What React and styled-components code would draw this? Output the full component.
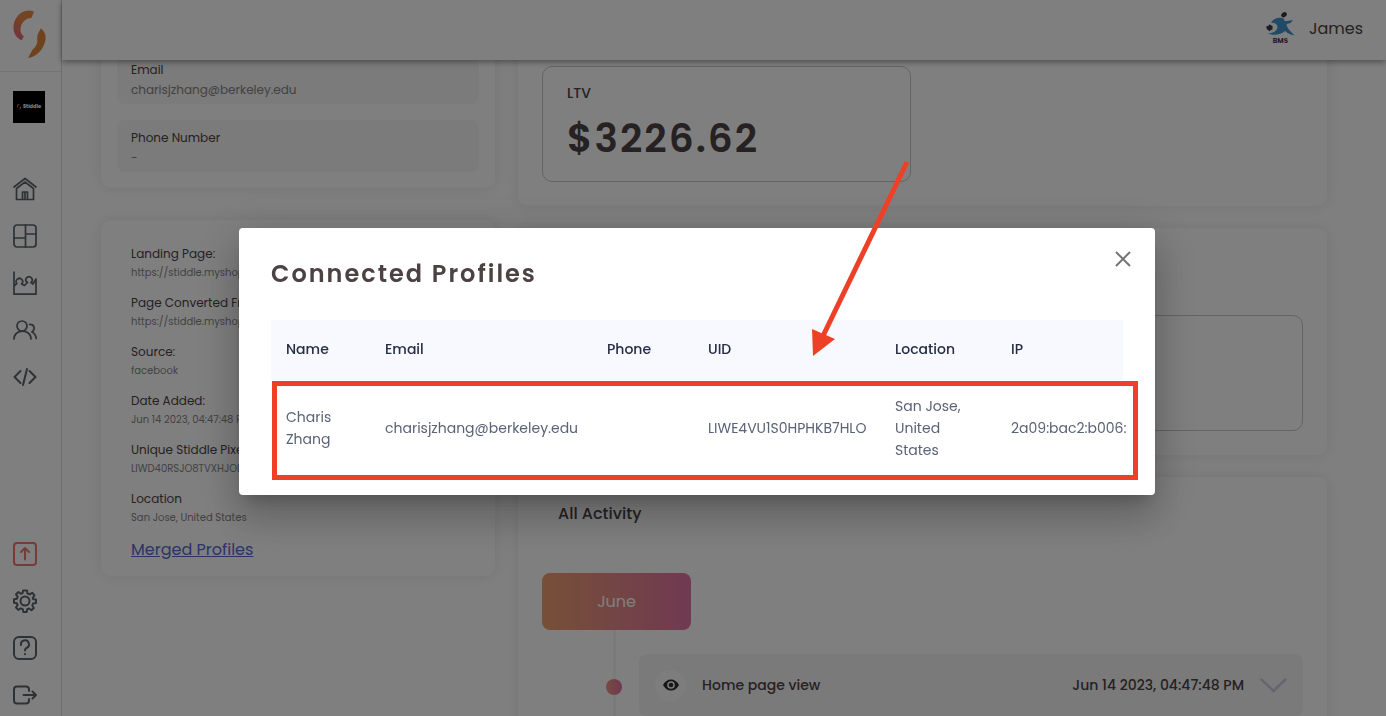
import React from "react";
import styled, { createGlobalStyle } from "styled-components";

const GlobalStyle = createGlobalStyle`
  * {
    box-sizing: border-box;
  }

  body {
    margin: 0;
    background: #fff;
    color: #4c4244;
    font-family: Poppins, Inter, sans-serif;
  }
`;

const Shell = styled.div`
  display: flex;
  height: 100vh;
  overflow: hidden;
`;

const Sidebar = styled.aside`
  width: 62px;
  flex-shrink: 0;
  display: flex;
  flex-direction: column;
  border-right: 1px solid #dcdcdc;
  padding-bottom: 9px;
`;

const Brand = styled.a`
  display: block;
  height: 72px;
  padding: 10px 13px;
  border-bottom: 1px solid #e8e8e8;
`;

const StoreBadge = styled.div`
  width: 32px;
  height: 32px;
  margin: 19px 0 54px 13px;
  background: #000;
  color: #fff;
  display: flex;
  align-items: center;
  justify-content: center;
  gap: 2px;
  font-size: 5px;
  font-weight: 700;
`;

const Nav = styled.nav`
  display: flex;
  flex-direction: column;
  gap: 23px;
  padding-left: 13px;
  margin-top: ${(props) => (props.$bottom ? "auto" : "0")};
`;

const NavLink = styled.a`
  width: 24px;
  height: 24px;
  color: ${(props) => (props.$accent ? "#f0776e" : "#5c6468")};

  svg {
    display: block;
    fill: none;
    stroke: currentColor;
    stroke-width: ${(props) => (props.$bold ? 2 : 1.7)};
    stroke-linecap: round;
    stroke-linejoin: round;
  }
`;

const Main = styled.div`
  flex: 1;
  min-width: 0;
  display: flex;
  flex-direction: column;
`;

const Header = styled.header`
  height: 60px;
  flex-shrink: 0;
  position: relative;
  z-index: 1;
  display: flex;
  align-items: center;
  justify-content: flex-end;
  gap: 14px;
  padding: 0 23px 4px;
  background: #fff;
  box-shadow: 0 2px 6px rgba(0, 0, 0, 0.4);
`;

const Company = styled.div`
  display: flex;
  flex-direction: column;
  align-items: center;
  font-size: 7px;
  line-height: 8px;
  font-weight: 700;
`;

const UserName = styled.span`
  font-size: 16px;
`;

const Content = styled.main`
  display: grid;
  grid-template-columns: 19fr 39fr;
  gap: 23px;
  align-items: start;
  margin-top: -24px;
  padding: 0 59px 0 39px;
`;

const Column = styled.div`
  display: grid;
  gap: ${(props) => props.$gap}px;
  min-width: 0;
`;

const Card = styled.section`
  border-radius: 10px;
  background: #fff;
  box-shadow: 0 0 16px rgba(0, 0, 0, 0.09);
`;

const ContactCard = styled(Card)`
  display: grid;
  gap: 16px;
  padding: 16px;
`;

const Field = styled.div`
  height: 52px;
  padding: 8px 14px;
  border-radius: 8px;
  background: #f6f6f6;
`;

const Label = styled.div`
  font-size: 12px;
  line-height: 20px;
`;

const FieldValue = styled.div`
  font-size: 12px;
  line-height: 20px;
  color: #858585;
`;

const DetailsCard = styled(Card)`
  height: 356px;
  padding: 24px 30px;
`;

const Detail = styled.div`
  margin-bottom: 11px;
  white-space: nowrap;
  overflow: hidden;
`;

const DetailValue = styled.div`
  font-size: 10px;
  line-height: 18px;
  color: #858585;
`;

const MergedLink = styled.a`
  display: block;
  width: fit-content;
  font-size: 16px;
  line-height: 24px;
  color: #5468d4;
`;

const StatCard = styled(Card)`
  display: grid;
  grid-template-columns: 1fr 1fr;
  gap: 24px;
  padding: ${(props) => props.$top}px 24px 24px;
`;

const StatBox = styled.div`
  grid-column: ${(props) => (props.$second ? 2 : 1)};
  height: 116px;
  padding: 14px 24px;
  border: 1px solid #c8c8c8;
  border-radius: 10px;
`;

const StatLabel = styled.div`
  font-size: 14px;
  line-height: 24px;
  font-weight: 500;
`;

const StatValue = styled.div`
  font-size: 39px;
  line-height: 68px;
  font-weight: 600;
  letter-spacing: 2px;
`;

const ActivityCard = styled(Card)`
  height: 400px;
  padding: 22px 24px;
`;

const ActivityTitle = styled.h2`
  margin: 0 0 44px;
  padding-left: 16px;
  font-size: 16px;
  line-height: 30px;
  font-weight: 500;
`;

const Month = styled.button`
  display: block;
  width: 149px;
  height: 57px;
  border: 0;
  border-radius: 8px;
  background: linear-gradient(90deg, #eea070, #e074a4);
  color: #fff;
  font: inherit;
  font-size: 16px;
`;

const Timeline = styled.div`
  display: grid;
  grid-template-columns: 97px 1fr;
`;

const Rail = styled.div`
  display: flex;
  flex-direction: column;
  align-items: center;
  width: 16px;
  margin-left: 64px;

  &::before {
    content: "";
    width: 3px;
    height: 49px;
    background: #f4f4f4;
  }

  &::after {
    content: "";
    width: 3px;
    flex: 1;
    background: #f4f4f4;
  }
`;

const Dot = styled.span`
  width: 16px;
  height: 16px;
  border-radius: 50%;
  background: linear-gradient(90deg, #f09880, #e070a0);
`;

const ActivityItem = styled.div`
  display: flex;
  align-items: center;
  gap: 16px;
  height: 62px;
  margin: 24px 0;
  padding: 0 16px;
  border-radius: 8px;
  background: #f5f5f5;
  font-size: 14px;
  font-weight: 500;
`;

const EyeBadge = styled.span`
  display: flex;
  align-items: center;
  justify-content: center;
  width: 31px;
  height: 31px;
  border-radius: 50%;
  background: #fbfbfb;
`;

const ItemDate = styled.time`
  margin-left: auto;
`;

const Overlay = styled.div`
  position: fixed;
  inset: 0;
  z-index: 10;
  display: flex;
  align-items: center;
  justify-content: center;
  padding: 7px 0 0 8px;
  background: rgba(0, 0, 0, 0.5);
`;

const Dialog = styled.div`
  position: relative;
  width: 916px;
  max-width: calc(100% - 64px);
  padding: 32px 32px 18px;
  border-radius: 4px;
  background: #fff;
  box-shadow: 0 11px 15px -7px rgba(0, 0, 0, 0.2),
    0 24px 38px 3px rgba(0, 0, 0, 0.14), 0 9px 46px 8px rgba(0, 0, 0, 0.12);
`;

const DialogTitle = styled.h1`
  margin: 0 0 32px;
  font-size: 24px;
  line-height: 28px;
  font-weight: 600;
  letter-spacing: 2px;
`;

const CloseButton = styled.button`
  position: absolute;
  top: 19px;
  right: 20px;
  width: 24px;
  height: 24px;
  padding: 0;
  border: 0;
  background: none;
  color: #757575;
  cursor: pointer;

  svg {
    display: block;
  }
`;

const Table = styled.table`
  width: 100%;
  table-layout: fixed;
  border-collapse: collapse;
  font-size: 14px;
  line-height: 22px;
  text-align: left;
`;

const Th = styled.th`
  width: ${(props) => (props.$width ? `${props.$width}px` : "auto")};
  height: 60px;
  padding: 0 15px 2px;
  background: #f7f9ff;
  color: #262d44;
  font-weight: 500;
`;

const Td = styled.td`
  height: 97px;
  padding: 0 15px 2px;
  color: #5a6275;
  white-space: ${(props) => (props.$nowrap ? "nowrap" : "normal")};
`;

const Highlight = styled.div`
  position: absolute;
  left: 33px;
  right: 17px;
  top: 153px;
  height: 99px;
  border: 5px solid #ee4026;
  pointer-events: none;
`;

const Arrow = styled.svg`
  position: absolute;
  left: 570px;
  top: -70px;
  pointer-events: none;
`;

const details = [
  ["Landing Page:", "https://stiddle.myshopify.com/"],
  ["Page Converted From:", "https://stiddle.myshopify.com/"],
  ["Source:", "facebook"],
  ["Date Added:", "Jun 14 2023, 04:47:48 PM"],
  ["Unique Stiddle Pixel ID:", "LIWD40RSJO8TVXHJOL"],
  ["Location", "San Jose, United States"],
];

const columns = [
  ["Name", 99],
  ["Email", 222],
  ["Phone", 101],
  ["UID", 187],
  ["Location", 116],
  ["IP", null],
];

function StiddleMark({ width, height }) {
  return (
    <svg width={width} height={height} viewBox="40 29 97 142" aria-hidden="true">
      <defs>
        <linearGradient id="mark" x1="0" y1="1" x2="0.7" y2="0">
          <stop offset="0" stopColor="#e86088" />
          <stop offset="0.7" stopColor="#e88a44" />
        </linearGradient>
      </defs>
      <path
        fill="url(#mark)"
        d="M102 34C94 30 86 29 76 32C55 38 41 58 41 81C41 99 50 112 65 119L72 107C64 101 61 94 62 84C64 66 78 53 94 53Z"
      />
      <path
        fill="#dc8438"
        d="M122 84C132 91 137 101 136 114C134 140 112 168 84 171L98 146C106 139 111 132 112 121C111 113 111 108 113 101Z"
      />
    </svg>
  );
}

function Icon({ children }) {
  return (
    <svg width="24" height="24" viewBox="0 0 24 24" aria-hidden="true">
      {children}
    </svg>
  );
}

function CompanyLogo() {
  return (
    <svg width="29" height="26" viewBox="82 30 87 78" aria-hidden="true">
      <path
        fill="#4294d2"
        d="M97 65C103 54 114 49 127 50C136 51 138 58 139 61L163 57L156 66L144 69C144 80 154 90 168 103C154 101 147 97 139 90C125 102 106 105 87 97C103 97 113 91 116 82C118 73 113 65 97 65Z"
      />
      <ellipse cx="136" cy="41" rx="9" ry="7" fill="#3c3838" transform="rotate(-40 136 41)" />
      <path fill="#3c3838" d="M83 76L90 74L92 70L97 73L102 76L101 86L97 86L93 91L88 87L84 84Z" />
    </svg>
  );
}

function SideNav() {
  return (
    <Sidebar>
      <Brand href="#" aria-label="Stiddle">
        <StiddleMark width={33} height={48} />
      </Brand>
      <StoreBadge>
        <StiddleMark width={4} height={6} />
        Stiddle
      </StoreBadge>
      <Nav>
        <NavLink href="#" aria-label="Home">
          <Icon>
            <path d="M1 10L12 1.500L23 10M3.500 11.500V22.500H20.500V11.500L12 5Z" />
            <path d="M9.500 22V15H14.500V22M12 15.500V22" />
          </Icon>
        </NavLink>
        <NavLink href="#" aria-label="Dashboard">
          <Icon>
            <rect x="1" y="1" width="22" height="22" rx="3" />
            <path d="M12.500 1V23M1 14H12.500M12.500 10H23" />
          </Icon>
        </NavLink>
        <NavLink href="#" aria-label="Reports">
          <Icon>
            <path d="M1 1V23.200H23V8L20 13L18 11.500A3.200 3.200 0 1 0 13.200 10.500L14.500 11.500L11.500 14.500L8.500 13A3.200 3.200 0 1 0 3.800 12.500L1 15" />
          </Icon>
        </NavLink>
        <NavLink href="#" aria-label="Contacts">
          <Icon>
            <circle cx="9" cy="8" r="5" />
            <path d="M1 21C1 10.500 18 10.500 18 21M16.500 6.500C21.500 6 22.500 11.500 19 14C22 15.500 23 18 23.200 20.500" />
          </Icon>
        </NavLink>
        <NavLink href="#" aria-label="Code" $bold>
          <Icon>
            <path d="M7.500 6L1.500 12L7.500 18M16.500 6L22.500 12L16.500 18M14 4L10 20" />
          </Icon>
        </NavLink>
      </Nav>
      <Nav $bottom>
        <NavLink href="#" aria-label="Upgrade" $accent $bold>
          <Icon>
            <rect x="1" y="1" width="22" height="22" rx="3" />
            <path d="M12 17.500V6.500M8 10L12 6L16 10" />
          </Icon>
        </NavLink>
        <NavLink href="#" aria-label="Settings" $bold>
          <Icon>
            <circle cx="12" cy="12" r="4.500" />
            <path d="M10 1.500H14L14.500 4.500L16.800 5.400L19.200 3.700L21.500 6.500L19.700 8.800L20.200 10.200L23 10.500V14L20 14.500L19.300 16.500L20.800 19L18.500 21.200L16 19.500L14.200 20.200L13.700 23H10.300L9.800 20.200L7.800 19.300L5.300 20.900L3 18.500L4.600 16.100L3.900 14.300L1 13.700V10.300L3.900 9.800L4.700 7.700L3 5.300L5.500 3L7.900 4.700L9.700 4Z" />
          </Icon>
        </NavLink>
        <NavLink href="#" aria-label="Help" $bold>
          <Icon>
            <rect x="1" y="1" width="22" height="22" rx="5" />
            <path d="M8 9A4 4 0 1 1 13.500 12C12.400 12.500 12 13.200 12 14.500M12 18V18.200" />
          </Icon>
        </NavLink>
        <NavLink href="#" aria-label="Log out" $bold>
          <Icon>
            <path d="M16 8V6.500A3 3 0 0 0 13 3.500H4A3 3 0 0 0 1 6.500V17.500A3 3 0 0 0 4 20.500H13A3 3 0 0 0 16 17.500V16M10.500 12H23M19.500 8.500L23 12L19.500 15.500" />
          </Icon>
        </NavLink>
      </Nav>
    </Sidebar>
  );
}

function ProfilesDialog() {
  return (
    <Overlay>
      <Dialog role="dialog" aria-modal="true" aria-labelledby="dialog-title">
        <DialogTitle id="dialog-title">Connected Profiles</DialogTitle>
        <CloseButton aria-label="Close">
          <svg width="24" height="24" viewBox="0 0 24 24" stroke="currentColor" strokeWidth="2">
            <path d="M5 5L19 19M19 5L5 19" />
          </svg>
        </CloseButton>
        <Table>
          <thead>
            <tr>
              {columns.map(([name, width]) => (
                <Th key={name} $width={width}>
                  {name}
                </Th>
              ))}
            </tr>
          </thead>
          <tbody>
            <tr>
              <Td>Charis Zhang</Td>
              <Td $nowrap>charisjzhang@berkeley.edu</Td>
              <Td />
              <Td $nowrap>LIWE4VU1S0HPHKB7HLO</Td>
              <Td>San Jose, United States</Td>
              <Td $nowrap>2a09:bac2:b006:</Td>
            </tr>
          </tbody>
        </Table>
        <Highlight />
        <Arrow width="110" height="204" viewBox="0 0 110 204" aria-hidden="true">
          <path d="M98 4L13 180" stroke="#ee4026" strokeWidth="5" />
          <path d="M4 198L3 171L26 181Z" fill="#ee4026" />
        </Arrow>
      </Dialog>
    </Overlay>
  );
}

function App() {
  return (
    <>
      <GlobalStyle />
      <Shell>
        <SideNav />
        <Main>
          <Header>
            <Company>
              <CompanyLogo />
              BMS
            </Company>
            <UserName>James</UserName>
          </Header>
          <Content>
            <Column $gap={32}>
              <ContactCard>
                <Field>
                  <Label>Email</Label>
                  <FieldValue>charisjzhang@berkeley.edu</FieldValue>
                </Field>
                <Field>
                  <Label>Phone Number</Label>
                  <FieldValue>-</FieldValue>
                </Field>
              </ContactCard>
              <DetailsCard>
                {details.map(([label, value]) => (
                  <Detail key={label}>
                    <Label>{label}</Label>
                    <DetailValue>{value}</DetailValue>
                  </Detail>
                ))}
                <MergedLink href="#">Merged Profiles</MergedLink>
              </DetailsCard>
            </Column>
            <Column $gap={22}>
              <StatCard $top={30}>
                <StatBox>
                  <StatLabel>LTV</StatLabel>
                  <StatValue>$3226.62</StatValue>
                </StatBox>
              </StatCard>
              <StatCard $top={87}>
                <StatBox $second />
              </StatCard>
              <ActivityCard>
                <ActivityTitle>All Activity</ActivityTitle>
                <Month>June</Month>
                <Timeline>
                  <Rail>
                    <Dot />
                  </Rail>
                  <ActivityItem>
                    <EyeBadge>
                      <svg width="16" height="12" viewBox="0 0 16 12" aria-hidden="true">
                        <path
                          fill="#302c2e"
                          fillRule="evenodd"
                          d="M0 6Q3 .5 8 .5T16 6Q13 11.500 8 11.500T0 6ZM8 2.200A3.800 3.800 0 1 0 8 9.800A3.800 3.800 0 1 0 8 2.200Z"
                        />
                        <circle cx="8" cy="6" r="2.300" fill="#302c2e" />
                      </svg>
                    </EyeBadge>
                    <span>Home page view</span>
                    <ItemDate>Jun 14 2023, 04:47:48 PM</ItemDate>
                    <svg width="27" height="15" viewBox="0 0 27 15" aria-hidden="true">
                      <path
                        d="M1.500 1.500L13.500 13L25.500 1.500"
                        fill="none"
                        stroke="#c4cede"
                        strokeWidth="2.500"
                        strokeLinecap="round"
                      />
                    </svg>
                  </ActivityItem>
                </Timeline>
              </ActivityCard>
            </Column>
          </Content>
        </Main>
      </Shell>
      <ProfilesDialog />
    </>
  );
}

export default App;
